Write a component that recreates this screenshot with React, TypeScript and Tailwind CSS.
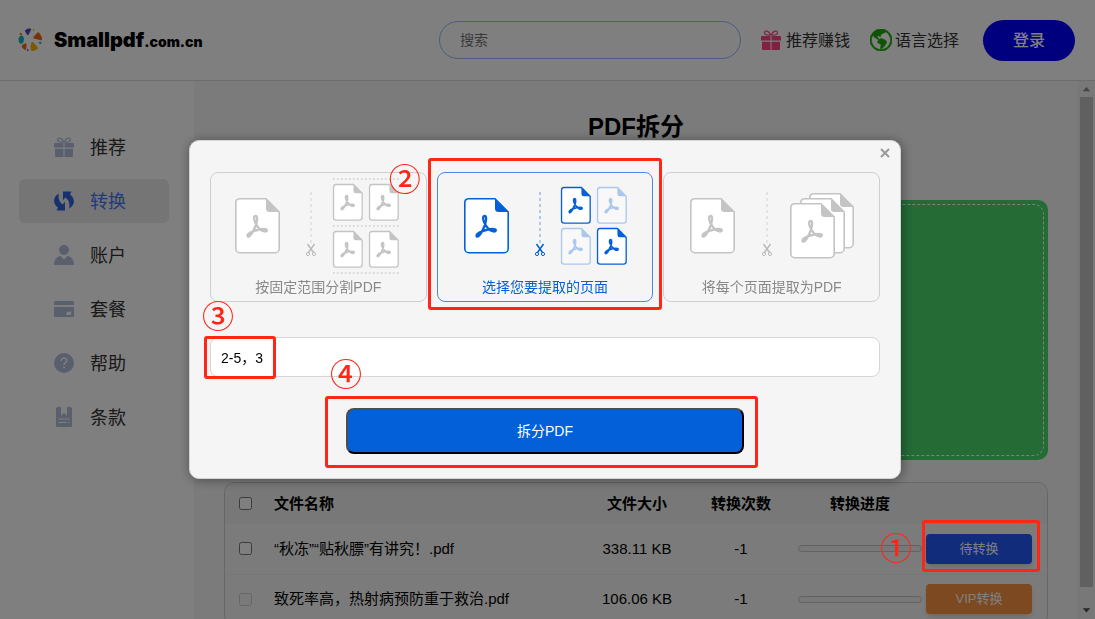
import type { ReactNode } from "react";
import { BsGlobeAmericas } from "react-icons/bs";

const menu = [
  { label: "推荐", icon: <GiftIcon />, active: false },
  { label: "转换", icon: <ConvertIcon />, active: true },
  { label: "账户", icon: <UserIcon />, active: false },
  { label: "套餐", icon: <CardIcon />, active: false },
  { label: "帮助", icon: <HelpIcon />, active: false },
  { label: "条款", icon: <TermsIcon />, active: false },
];

const files = [
  { name: "“秋冻”“贴秋膘”有讲究！.pdf", size: "338.11 KB", count: "-1", action: "待转换", vip: false },
  { name: "致死率高，热射病预防重于救治.pdf", size: "106.06 KB", count: "-1", action: "VIP转换", vip: true },
];

export default function App() {
  return (
    <div className="flex h-screen flex-col overflow-hidden bg-white font-['Liberation_Sans','Noto_Sans_CJK_SC',sans-serif] text-black">
      <Header />
      <div className="flex min-h-0 flex-1">
        <Sidebar />
        <main className="min-w-0 flex-1 overflow-hidden bg-[#f7f7f7] px-[30px] pt-7">
          <h1 className="text-center text-2xl leading-9 font-bold">PDF拆分</h1>
          <div className="mt-[55px] h-[260px] rounded-[10px] bg-[#48d66c] p-1">
            <div className="h-full rounded-[10px] border border-dashed border-white" />
          </div>
          <FileTable />
        </main>
        <Scrollbar />
      </div>
      <SplitDialog />
    </div>
  );
}

function Header() {
  return (
    <header className="flex h-[81px] shrink-0 items-center border-b border-[#d9d9d9] pr-5 pl-[18px]">
      <a href="#" className="flex items-center gap-[11px] font-[Inter] font-black">
        <Logo />
        <span className="text-xl leading-6">
          Smallpdf<span className="text-sm">.com.cn</span>
        </span>
      </a>
      <input
        type="search"
        aria-label="搜索"
        placeholder="搜索"
        className="ml-auto h-[38px] w-[302px] rounded-full border border-[#94b8ff] px-5 text-sm placeholder:text-[#757575]"
      />
      <a href="#" className="ml-5 flex items-center gap-[5px] text-base text-[#333]">
        <span className="text-[#ff4380]"><GiftIcon /></span>
        <span className="pt-0.5">推荐赚钱</span>
      </a>
      <a href="#" className="ml-5 flex items-center gap-[3px] text-base text-[#333]">
        <GlobeIcon />
        <span className="pt-0.5">语言选择</span>
      </a>
      <button type="button" className="ml-6 h-[41px] w-[92px] rounded-full bg-[#0000ff] pt-0.5 text-base font-medium text-white">
        登录
      </button>
    </header>
  );
}

function Sidebar() {
  return (
    <nav className="flex w-[194px] shrink-0 flex-col gap-2.5 pt-11 pr-[25px] pl-[19px]">
      {menu.map((item) => (
        <a
          key={item.label}
          href="#"
          className={
            item.active
              ? "flex h-11 items-center gap-4 rounded-md bg-[#ebebeb] pl-[35px] text-lg text-[#3f76f0]"
              : "flex h-11 items-center gap-4 pl-[35px] text-lg text-[#333]"
          }
        >
          <span className={item.active ? "text-[#2f62dd]" : "text-[#b4bfda]"}>{item.icon}</span>
          <span className="pt-0.5">{item.label}</span>
        </a>
      ))}
    </nav>
  );
}

function FileTable() {
  return (
    <div className="mt-[22px] rounded-[10px] border border-[#cfcfcf]">
      <table className="w-full table-fixed text-[15px] leading-5">
        <colgroup>
          <col className="w-10" />
          <col />
          <col className="w-[98px]" />
          <col className="w-[110px]" />
          <col className="w-32" />
          <col className="w-[123px]" />
        </colgroup>
        <thead>
          <tr className="h-[41px] bg-[#f0f0f0]">
            <th className="rounded-tl-[10px]">
              <input type="checkbox" aria-label="全选" className="mx-auto block h-[13px] w-[13px]" />
            </th>
            <th className="pl-[9px] text-left">文件名称</th>
            <th>文件大小</th>
            <th>转换次数</th>
            <th>转换进度</th>
            <th className="rounded-tr-[10px]" />
          </tr>
        </thead>
        <tbody>
          {files.map((file) => (
            <tr key={file.name} className="h-[50px] border-b border-[#efefef] text-center">
              <td>
                <input type="checkbox" aria-label={file.name} disabled={file.vip} className="mx-auto block h-[13px] w-[13px]" />
              </td>
              <td className="truncate pl-[9px] text-left">{file.name}</td>
              <td>{file.size}</td>
              <td>{file.count}</td>
              <td className="px-0.5">
                <div className="h-[7px] rounded-full border border-[#c4c4c4] bg-[#f0f0f0]" />
              </td>
              <td className="px-0.5 text-left">
                <div className="relative inline-block align-middle">
                  <button
                    type="button"
                    className={
                      file.vip
                        ? "block h-[30px] w-[106px] rounded bg-[#f99340] text-[13px] text-white shadow-md"
                        : "block h-[30px] w-[106px] rounded bg-[#2258f5] text-[13px] text-white shadow-md"
                    }
                  >
                    {file.action}
                  </button>
                  {!file.vip && (
                    <>
                      <Frame className="-top-3.5 -right-2 -bottom-2 -left-1" />
                      <Step className="-top-1 -left-[46px]">①</Step>
                    </>
                  )}
                </div>
              </td>
            </tr>
          ))}
        </tbody>
      </table>
    </div>
  );
}

function Scrollbar() {
  return (
    <div className="flex w-[17px] shrink-0 flex-col items-center bg-[#f1f1f1]">
      <svg viewBox="0 0 17 17" className="h-4 w-[17px] shrink-0 fill-[#8a8a8a]">
        <path d="M4.500 11 8.500 6.500l4 4.500z" />
      </svg>
      <div className="w-[13px] flex-1 bg-[#c1c1c1]" />
      <div className="h-4" />
      <svg viewBox="0 0 17 17" className="h-4 w-[17px] shrink-0 fill-[#505050]">
        <path d="M4.500 5.500 8.500 10l4-4.500z" />
      </svg>
    </div>
  );
}

function SplitDialog() {
  return (
    <div className="fixed inset-0 z-40 flex items-center justify-center bg-black/50 pr-[5px]">
      <div
        role="dialog"
        aria-label="PDF拆分"
        className="relative w-[712px] rounded-[10px] border border-[#d4d4d4] bg-[#f5f5f5] px-5 pt-[31px] pb-6 shadow-[1px_1px_12px_rgba(0,0,0,0.4)]"
      >
        <button type="button" aria-label="关闭" className="absolute top-[7px] right-2.5 text-[#999]">
          <svg viewBox="0 0 10 10" className="h-2.5 w-2.5" stroke="currentColor" strokeWidth="2">
            <path d="M1 1l8 8M9 1 1 9" />
          </svg>
        </button>

        <div className="grid grid-cols-3 gap-2.5">
          <ModeCard label="按固定范围分割PDF">
            <Page x={7} y={25} />
            <Cut x={83} />
            <g stroke="#ccc" strokeDasharray="1.5 2.5" strokeWidth="1.5">
              <path d="M105 6h67M105 53h67M105 100h67" />
            </g>
            <Page x={105} y={11} small />
            <Page x={141} y={11} small />
            <Page x={105} y={58} small />
            <Page x={141} y={58} small />
          </ModeCard>
          <div className="relative">
            <ModeCard label="选择您要提取的页面" active>
              <Page x={9} y={25} active />
              <Cut x={85} active />
              <Page x={106} y={14} small active />
              <Page x={142} y={14} small active faded />
              <Page x={106} y={55} small active faded />
              <Page x={142} y={55} small active />
            </ModeCard>
            <Frame className="-inset-x-[9px] -top-3.5 -bottom-2" />
            <Step className="-top-[11px] -left-12">②</Step>
          </div>
          <ModeCard label="将每个页面提取为PDF">
            <Page x={8} y={25} />
            <Cut x={85} />
            <Page x={127} y={20} />
            <Page x={118} y={25} />
            <Page x={108} y={30} />
          </ModeCard>
        </div>

        <div className="relative mt-[35px]">
          <input
            type="text"
            aria-label="页面范围"
            defaultValue="2-5，3"
            className="block h-10 w-full rounded-lg border border-[#d6d6d6] bg-white px-2.5 text-sm text-black"
          />
          <Frame className="-top-px -left-1.5 h-[43px] w-[72px]" />
          <Step className="-top-[39px] -left-2">③</Step>
        </div>

        <div className="relative mx-auto mt-[31px] w-[398px]">
          <button
            type="button"
            className="block h-[46px] w-full rounded-lg border-2 border-t-[#4d4d4d] border-r-black border-b-black border-l-[#4d4d4d] bg-[#0360d9] text-sm text-white"
          >
            拆分PDF
          </button>
          <Frame className="-top-3 -right-3.5 -bottom-3.5 -left-[21px]" />
          <Step className="-top-[52px] -left-4">④</Step>
        </div>
      </div>
    </div>
  );
}

function ModeCard({ label, active, children }: { label: string; active?: boolean; children: ReactNode }) {
  return (
    <button
      type="button"
      aria-pressed={!!active}
      className={
        active
          ? "flex h-[130px] w-full flex-col items-center rounded-lg border border-[#4a8ae2] text-sm text-[#0360d9]"
          : "flex h-[130px] w-full flex-col items-center rounded-lg border border-[#cfcfcf] text-sm text-[#888]"
      }
    >
      <svg viewBox="0 0 180 104" className="h-[104px] w-[180px]" fill="none">
        {children}
      </svg>
      {label}
    </button>
  );
}

type PageProps = { x: number; y: number; small?: boolean; active?: boolean; faded?: boolean };

// sheet with a folded corner and the looped pdf mark
function Page({ x, y, small, active, faded }: PageProps) {
  const color = active ? "#0360d9" : "#c4c4c4";
  const scale = small ? 0.66 : 1;
  return (
    <g transform={`translate(${x} ${y}) scale(${scale})`} opacity={faded ? 0.3 : 1}>
      <path
        d="M4.500.8H31L44.200 14v36.700a4 4 0 0 1-4 4H4.800a4 4 0 0 1-4-4V4.800a4 4 0 0 1 3.700-4z"
        fill="#fff"
        stroke={color}
        strokeWidth={small ? 2 : 1.6}
      />
      <path d="M31 .5 44.500 14H34.500a3.500 3.500 0 0 1-3.500-3.500z" fill={color} />
      <path
        d="M20.300 24.500c-2-4-1.300-6.800.6-6.700 2 .4 1.300 6-.5 10.400-2 4.800-4.800 9.800-7 10.500-2.200-.8-.2-3.700 4.600-5.400 5-1.800 10.500-2.700 13-2 2.200 1.300-.2 3.200-3.700 1.500-3.300-1.700-5.500-4.800-7-8.300z"
        stroke={color}
        strokeWidth={small ? 2.8 : 2.3}
        strokeLinejoin="round"
      />
    </g>
  );
}

function Cut({ x, active }: { x: number; active?: boolean }) {
  const color = active ? "#0360d9" : "#bbb";
  return (
    <g transform={`translate(${x} 0)`} stroke={color}>
      <path d="M0 19v52" strokeDasharray="3 3" strokeOpacity="0.6" />
      <path d="M-3.500 71 2.500 79.500M3.500 71l-6 8.500" strokeWidth="1.500" />
      <circle cx="-3" cy="81" r="1.600" />
      <circle cx="3" cy="81" r="1.600" />
    </g>
  );
}

function Frame({ className }: { className: string }) {
  return <div className={`pointer-events-none absolute z-50 rounded-[3px] border-3 border-[#ff2618] ${className}`} />;
}

function Step({ className, children }: { className: string; children: ReactNode }) {
  return (
    <span className={`pointer-events-none absolute z-50 font-['Noto_Sans_CJK_SC',sans-serif] text-[32px] leading-8 font-medium text-[#ff2618] ${className}`}>
      {children}
    </span>
  );
}

function Logo() {
  return (
    <svg viewBox="0 0 25 24" className="h-6 w-[25px]">
      <path d="M7.500 2Q10 0 13 .8q.5.500 0 1.200L10.500 6.700Q9.700 7.500 9 6.500L7 3.200q-.3-.7.500-1.200z" fill="#5b3fc4" />
      <path d="M19.500 4.500q1-.5 1.800.5Q24.500 9 24 11.500q-.2 1-1.200.8L16 10.500q-1.200-.6-.5-1.600z" fill="#f26512" />
      <path d="M13.500 14q1-.8 1.800.2l4.500 5q.7 1-.3 1.800Q16.500 23.500 14 23q-1-.2-1.200-1.500-.8-4 .7-7.500z" fill="#f5b50a" />
      <path d="M3.500 7.500Q6 8 5.900 11.500T3.500 15.700Q.7 15.500.6 11.700T3.500 7.500z" fill="#10b5b8" />
      <path d="M7.500 15.200q1 0 1 1.200.2 3-.6 5-.5.700-1.200.4-2-.8-3-3-.3-.8.300-1.400 1.500-1.700 3.500-2.200z" fill="#f26512" />
      <path d="M20.500 14.200q2-.8 3-.2 0 1.500-.8 2.200-1.500-.5-2.200-2z" fill="#10b5b8" />
      <path d="M9.700 20.500q1 1 1 2.500-1 .2-1.700-.3 0-1.500.7-2.200z" fill="#5b3fc4" />
      <path d="M2 4.800q1.500 0 2.300 1.700-1 .9-2.300.3-.7-1.200 0-2z" fill="#f26512" />
      <path d="M15 .8q1.200 0 1.500.7l-1 1.500q-.8-.8-.5-2.200z" fill="#f5b50a" />
    </svg>
  );
}

function GlobeIcon() {
  return <BsGlobeAmericas className="h-[22px] w-[22px] stroke-[#1ea80a] stroke-[0.5px] text-[#1ea80a]" />;
}

function GiftIcon() {
  return (
    <svg viewBox="0 0 20 20" className="h-5 w-5" fill="currentColor">
      <path d="M1 6h8.500v4.500H0V7a1 1 0 0 1 1-1zm9.500 0H19a1 1 0 0 1 1 1v3.500h-9.500zM1 11.800h8.500V20H2a1 1 0 0 1-1-1zm9.500 0H19V19a1 1 0 0 1-1 1h-7.500z" />
      <path
        d="M9.800 5C6 5.500 3.200 4.500 3.500 2.500 4 .3 7.500.3 9.800 5zm.4 0c3.800.5 6.600-.5 6.300-2.500C16 .3 12.500.3 10.200 5z"
        fill="none"
        stroke="currentColor"
        strokeWidth="1.200"
      />
    </svg>
  );
}

function ConvertIcon() {
  return (
    <svg viewBox="0 0 20 20" className="h-5 w-5" fill="currentColor">
      <path d="M4.800 2.500C-1.500 6-1.200 13 4 16.500L2.500 19.500H11v-8.700L8.700 13.500C5.200 11.500 4 7.500 4.800 2.500z" />
      <path d="M15.200 17.500C21.500 14 21.200 7 16 3.500L17.500.5H9v8.700l2.300-2.700C14.800 8.500 16 12.500 15.200 17.500z" />
    </svg>
  );
}

function UserIcon() {
  return (
    <svg viewBox="0 0 20 20" className="h-5 w-5" fill="currentColor">
      <circle cx="10" cy="5" r="5" />
      <path d="M0 20c0-5 2.500-8.200 6.500-9.200L10 14.500l3.500-3.700c4 1 6.500 4.200 6.500 9.200z" />
    </svg>
  );
}

function CardIcon() {
  return (
    <svg viewBox="0 0 20 20" className="h-5 w-5" fill="currentColor">
      <path d="M1.500 2h17A1.500 1.500 0 0 1 20 3.500V6H0V3.500A1.500 1.500 0 0 1 1.500 2z" />
      <path fillRule="evenodd" d="M0 8h20v8.500a1.500 1.500 0 0 1-1.500 1.500h-17A1.500 1.500 0 0 1 0 16.500zm13 4.800L12 16h4.500l1-3.200z" />
    </svg>
  );
}

function HelpIcon() {
  return (
    <svg viewBox="0 0 20 20" className="h-5 w-5">
      <circle cx="10" cy="10" r="10" fill="currentColor" />
      <path d="M7.200 8c0-4 5.800-3.600 5.600-.3C12.700 9.500 10 9.600 10 12" fill="none" stroke="#fff" strokeWidth="1.500" />
      <circle cx="10" cy="14.500" r="1" fill="#fff" />
    </svg>
  );
}

function TermsIcon() {
  return (
    <svg viewBox="0 0 20 20" className="h-5 w-5">
      <path d="M3.500 0H7v8.500L10 6l3 2.500V0h3.500A1.500 1.500 0 0 1 18 1.500v17a1.500 1.500 0 0 1-1.500 1.500h-13A1.500 1.500 0 0 1 2 18.500v-17A1.500 1.500 0 0 1 3.500 0z" fill="currentColor" />
      <path d="M4.500 12h11M4.500 15.500h8M14 15.500h1.500" stroke="#fff" strokeWidth="1.200" />
    </svg>
  );
}
